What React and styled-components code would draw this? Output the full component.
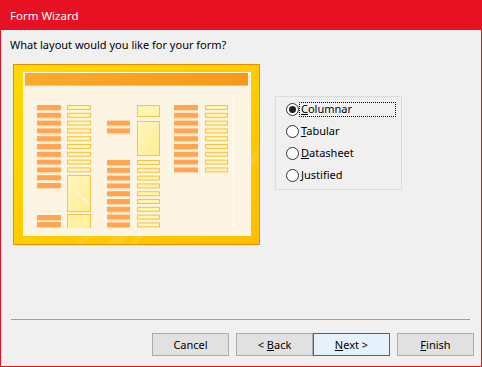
import React from 'react';
import styled, { createGlobalStyle } from 'styled-components';

const Global = createGlobalStyle`
  html, body { margin: 0; padding: 0; background: #f0f0f0; }
  body { font-family: "Noto Sans", "Segoe UI", sans-serif; font-size: 11px; color: #000; }
`;

const Window = styled.div`
  width: 482px;
  height: 367px;
  box-sizing: border-box;
  border: 1px solid #e81123;
  border-top: none;
  background: #f0f0f0;
  display: flex;
  flex-direction: column;
`;

const TitleBar = styled.div`
  height: 30px;
  flex: none;
  background: #e81123;
  color: #fff;
  display: flex;
  align-items: center;
  padding-left: 9px;
  font-size: 11.5px;
`;

const Body = styled.div`
  flex: 1;
  display: flex;
  flex-direction: column;
  padding: 0 7px 10px 9px;
`;

const Prompt = styled.div`
  margin-top: 7px;
  line-height: 16px;
`;

const MainRow = styled.div`
  display: flex;
  align-items: flex-start;
  margin-top: 11px;
`;

const PreviewBox = styled.div`
  margin-left: 3px;
  svg { display: block; }
`;

const OptionGroup = styled.div`
  margin-left: 15px;
  margin-top: 32px;
  width: 127px;
  height: 94px;
  box-sizing: border-box;
  border: 1px solid #dcdcdc;
  padding: 1px 0 0 10px;
  display: flex;
  flex-direction: column;
`;

const RadioRow = styled.div`
  height: 22px;
  display: flex;
  align-items: center;
`;

const RadioDot = styled.span`
  width: 13px;
  height: 13px;
  box-sizing: border-box;
  border-radius: 50%;
  border: 1px solid #333;
  background: #fff;
  flex: none;
  display: flex;
  align-items: center;
  justify-content: center;
  &::after {
    content: '';
    width: 7px;
    height: 7px;
    border-radius: 50%;
    background: ${p => (p.$checked ? '#222' : 'transparent')};
  }
`;

const RadioLabel = styled.span`
  width: 97px;
  height: 15px;
  box-sizing: border-box;
  padding-left: 1px;
  border: 1px dotted ${p => (p.$focused ? '#000' : 'transparent')};
  line-height: 11px;
  white-space: nowrap;
`;

const Separator = styled.div`
  margin-top: auto;
  margin-left: 1px;
  margin-right: 4px;
  height: 1px;
  background: #a0a0a0;
`;

const ButtonRow = styled.div`
  margin-top: 13px;
  display: flex;
  justify-content: flex-end;
  gap: 7px;
`;

const ButtonPair = styled.div`
  display: flex;
`;

const Button = styled.button`
  width: 77px;
  height: 23px;
  box-sizing: border-box;
  margin: 0;
  padding: 0;
  font-family: inherit;
  font-size: 11px;
  color: #000;
  background: ${p => (p.$primary ? '#e5f1fb' : '#e1e1e1')};
  border: 1px solid ${p => (p.$primary ? '#0078d7' : '#adadad')};
  u { text-decoration: underline; }
`;

const step = 7.8;
const range = (n, start, s = step) => Array.from({ length: n }, (_, i) => start + i * s);

const Label = ({ x, y, w }) => (
  <g>
    <rect x={x} y={y} width={w} height={5} fill="#ffa553" />
    <rect x={x} y={y + 5} width={w} height={1} fill="#fdd9a8" />
  </g>
);

const Field = ({ x, y, w, h = 5 }) => (
  <g>
    <rect x={x + 0.5} y={y + 0.5} width={w - 1} height={h - 1} fill="#fff0a2" stroke="#f8c244" />
    <rect x={x + 2} y={y + 2} width={w - 4} height={1} fill="#fffad6" />
  </g>
);

const Preview = () => (
  <svg width="247" height="181" viewBox="0 0 247 181">
    <defs>
      <linearGradient id="frameGrad" x1="0" y1="0" x2="1" y2="1">
        <stop offset="0" stopColor="#ffda00" />
        <stop offset="1" stopColor="#ffbf00" />
      </linearGradient>
      <linearGradient id="hdrGrad" x1="0" y1="0" x2="1" y2="0">
        <stop offset="0" stopColor="#fbaa2a" />
        <stop offset="1" stopColor="#f9981a" />
      </linearGradient>
      <linearGradient id="tallGrad" x1="0" y1="0" x2="1" y2="1">
        <stop offset="0" stopColor="#fff7bf" />
        <stop offset="1" stopColor="#ffec90" />
      </linearGradient>
      <clipPath id="pageClip">
        <rect x="11" y="22" width="226" height="142" />
      </clipPath>
    </defs>
    <rect x="0.5" y="0.5" width="246" height="180" fill="url(#frameGrad)" stroke="#f28a00" />
    <g stroke="#ffffff" strokeOpacity="0.2" strokeWidth="1.5">
      <line x1="64" y1="180" x2="72" y2="172" />
      <line x1="68" y1="180" x2="76" y2="172" />
      <line x1="94" y1="180" x2="102" y2="172" />
      <line x1="98" y1="180" x2="106" y2="172" />
      <line x1="102" y1="180" x2="110" y2="172" />
      <line x1="106" y1="180" x2="114" y2="172" />
      <line x1="117" y1="180" x2="125" y2="172" />
      <line x1="121" y1="180" x2="129" y2="172" />
      <line x1="238" y1="94" x2="245" y2="87" />
      <line x1="238" y1="98" x2="245" y2="91" />
      <line x1="238" y1="102" x2="245" y2="95" />
    </g>
    <rect x="10.5" y="8.5" width="227" height="163" fill="#fdf5e3" stroke="#fff8e2" />
    <rect x="12" y="9" width="223" height="13" fill="url(#hdrGrad)" />
    <rect x="12" y="21" width="223" height="1" fill="#fbc168" />
    <line x1="220.5" y1="31" x2="220.5" y2="164" stroke="#ffffff" strokeWidth="1.2" />
    <g clipPath="url(#pageClip)">
      {range(11, 41).map(y => <Label key={`l1${y}`} x={24} y={y} w={24} />)}
      <Label x={24} y={151} w={24} />
      <Label x={24} y={158} w={24} />
      {range(9, 41).map(y => <Field key={`f1${y}`} x={54} y={y} w={24} />)}
      <rect x="54.5" y="111.5" width="23" height="36" fill="url(#tallGrad)" stroke="#f8c244" />
      <line x1="62" y1="126" x2="77" y2="141" stroke="#ffffff" strokeOpacity="0.45" strokeWidth="2" />
      <rect x="54.5" y="150.5" width="23" height="20" fill="#fff0a2" stroke="#f8c244" />

      <Label x={94} y={56.6} w={23} />
      <Label x={94} y={64.4} w={23} />
      {range(9, 96).map(y => <Label key={`l2${y}`} x={94} y={y} w={23} />)}
      <rect x="124.5" y="41.5" width="22" height="11" fill="#fff3b0" stroke="#f8c244" />
      <rect x="124.5" y="57.5" width="22" height="34" fill="url(#tallGrad)" stroke="#f8c244" />
      {range(9, 96).map(y => <Field key={`f2${y}`} x={124} y={y} w={23} />)}

      {range(9, 41).map(y => <Label key={`l3${y}`} x={161} y={y} w={24} />)}
      {range(9, 41).map(y => <Field key={`f3${y}`} x={192} y={y} w={23} />)}
    </g>
  </svg>
);

const options = [
  { key: 'C', rest: 'olumnar', checked: true },
  { key: 'T', rest: 'abular' },
  { key: 'D', rest: 'atasheet' },
  { key: 'J', rest: 'ustified' },
];

export default function App() {
  return (
    <>
      <Global />
      <Window>
        <TitleBar>Form Wizard</TitleBar>
        <Body>
          <Prompt>What layout would you like for your form?</Prompt>
          <MainRow>
            <PreviewBox>
              <Preview />
            </PreviewBox>
            <OptionGroup>
              {options.map(o => (
                <RadioRow key={o.key}>
                  <RadioDot $checked={o.checked} />
                  <RadioLabel $focused={o.checked}>
                    <u>{o.key}</u>
                    {o.rest}
                  </RadioLabel>
                </RadioRow>
              ))}
            </OptionGroup>
          </MainRow>
          <Separator />
          <ButtonRow>
            <Button>Cancel</Button>
            <ButtonPair>
              <Button>
                &lt; <u>B</u>ack
              </Button>
              <Button $primary>
                <u>N</u>ext &gt;
              </Button>
            </ButtonPair>
            <Button>
              <u>F</u>inish
            </Button>
          </ButtonRow>
        </Body>
      </Window>
    </>
  );
}
